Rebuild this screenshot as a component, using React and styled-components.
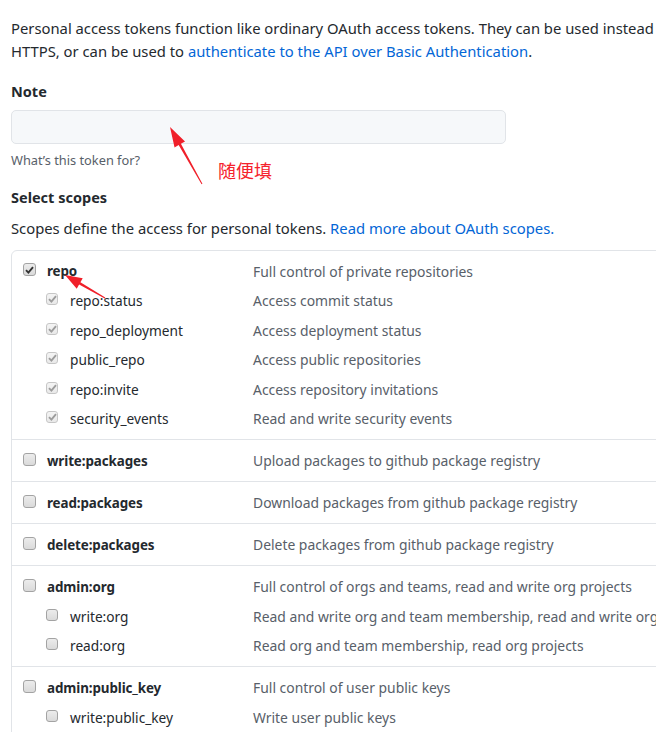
import styled, { createGlobalStyle } from 'styled-components'

const GlobalStyle = createGlobalStyle`
    html, body {
        margin: 0;
        background: #fff;
        overflow: hidden;
    }
    body {
        font-family: "Noto Sans", "Liberation Sans", sans-serif;
        color: #24292e;
    }
`;

const Page = styled.div`
    position: relative;
    width: 780px;
    padding: 17px 0 0 11px;
`;

const Intro = styled.div`
    font-size: 14.8px;
    line-height: 23px;
`;

const Line = styled.div`
    white-space: nowrap;
`;

const Link = styled.a`
    color: #0366d6;
    text-decoration: none;
`;

const Heading = styled.div`
    font-size: 14.5px;
    font-weight: 700;
    line-height: 21px;
    margin-top: ${props => props.$top}px;
`;

const NoteInput = styled.input`
    display: block;
    box-sizing: border-box;
    width: 495px;
    height: 34px;
    margin-top: 8px;
    background: #f6f8fa;
    border: 1px solid #e1e4e8;
    border-radius: 5px;
    outline: none;
`;

const Hint = styled.div`
    font-size: 12.8px;
    line-height: 18px;
    color: #586069;
    margin-top: 7px;
`;

const Text = styled.div`
    font-size: 14.8px;
    line-height: 21px;
    margin-top: 9.5px;
    white-space: nowrap;
`;

const ScopeBox = styled.div`
    margin-top: 11px;
    width: 760px;
    border: 1px solid #e1e4e8;
    border-radius: 6px;
`;

const ScopeGroup = styled.div`
    padding: 10px 0;
    & + & {
        border-top: 1px solid #e1e4e8;
    }
`;

const ScopeLine = styled.div`
    display: flex;
    align-items: center;
    height: 21px;
    margin-top: ${props => props.$sub ? '8.5px' : '0'};
    font-size: 14px;
    white-space: nowrap;
`;

const ScopeLabel = styled.div`
    display: flex;
    align-items: center;
    box-sizing: border-box;
    width: 241px;
    padding-left: ${props => props.$sub ? '34px' : '11px'};
    font-weight: ${props => props.$sub ? 400 : 700};
    font-size: ${props => props.$sub ? '13.7px' : '13.4px'};
    letter-spacing: ${props => props.$sub ? '0' : '-0.1px'};
    color: #24292e;
`;

const ScopeDesc = styled.div`
    font-size: 13.9px;
    color: #586069;
`;

const Box = styled.span`
    display: inline-flex;
    align-items: center;
    justify-content: center;
    box-sizing: border-box;
    width: ${props => props.$sub ? '12px' : '13px'};
    height: ${props => props.$sub ? '12px' : '13px'};
    margin-right: ${props => props.$sub ? '12px' : '11px'};
    margin-top: -3px;
    border: 1px solid ${props => props.$disabled ? '#c6c6c6' : '#a3a3a3'};
    border-radius: 3px;
    background: ${props => props.$disabled
        ? 'linear-gradient(#f4f4f4, #e9e9e9)'
        : 'linear-gradient(#ececec, #dadada)'};
`;

const Overlay = styled.svg`
    position: absolute;
    left: 0;
    top: 0;
    pointer-events: none;
`;

const Remark = styled.div`
    position: absolute;
    left: 218px;
    top: 158px;
    font-family: "Noto Sans CJK SC", sans-serif;
    font-size: 18px;
    line-height: 24px;
    color: #f5222d;
`;

const CheckBox = ({ checked, disabled, sub }) => (
    <Box $disabled={disabled} $sub={sub}>
        {checked && (
            <svg width="9" height="8" viewBox="0 0 9 8">
                <path d="M1 4.2 L3.4 6.6 L8 1.2" fill="none" stroke={disabled ? '#9c9c9c' : '#333'} strokeWidth="1.9" />
            </svg>
        )}
    </Box>
)

const scopes = [
    {
        name: 'repo', desc: 'Full control of private repositories', checked: true,
        subs: [
            ['repo:status', 'Access commit status'],
            ['repo_deployment', 'Access deployment status'],
            ['public_repo', 'Access public repositories'],
            ['repo:invite', 'Access repository invitations'],
            ['security_events', 'Read and write security events'],
        ],
    },
    { name: 'write:packages', desc: 'Upload packages to github package registry' },
    { name: 'read:packages', desc: 'Download packages from github package registry' },
    { name: 'delete:packages', desc: 'Delete packages from github package registry' },
    {
        name: 'admin:org', desc: 'Full control of orgs and teams, read and write org projects',
        subs: [
            ['write:org', 'Read and write org and team membership, read and write org projects'],
            ['read:org', 'Read org and team membership, read org projects'],
        ],
    },
    {
        name: 'admin:public_key', desc: 'Full control of user public keys',
        subs: [
            ['write:public_key', 'Write user public keys'],
            ['read:public_key', 'Read user public keys'],
        ],
    },
]

// arrow drawn from tail to tip, head as a triangle
const Arrow = ({ tail, tip, head = 20, half = 6 }) => {
    const dx = tip[0] - tail[0]
    const dy = tip[1] - tail[1]
    const len = Math.hypot(dx, dy)
    const ux = dx / len
    const uy = dy / len
    const px = -uy
    const py = ux
    const bx = tip[0] - ux * head
    const by = tip[1] - uy * head
    const pts = [
        tip,
        [bx + px * half, by + py * half],
        [bx + px * 1.3, by + py * 1.3],
        [tail[0] + px * 0.5, tail[1] + py * 0.5],
        [tail[0] - px * 0.5, tail[1] - py * 0.5],
        [bx - px * 1.3, by - py * 1.3],
        [bx - px * half, by - py * half],
    ]
    return <polygon points={pts.map(p => p.join(',')).join(' ')} fill="#f0202a" />
}

const App = () => {
    return (
        <Page>
            <GlobalStyle />
            <Intro>
                <Line>Personal access tokens function like ordinary OAuth access tokens. They can be used instead of a password for Git over</Line>
                <Line>HTTPS, or can be used to <Link href="#">authenticate to the API over Basic Authentication</Link>.</Line>
            </Intro>
            <Heading $top={17.5}>Note</Heading>
            <NoteInput type="text" />
            <Hint>What’s this token for?</Hint>
            <Heading $top={18.5}>Select scopes</Heading>
            <Text>
                Scopes define the access for personal tokens. <Link href="#">Read more about OAuth scopes.</Link>
            </Text>
            <ScopeBox>
                {scopes.map(scope => (
                    <ScopeGroup key={scope.name}>
                        <ScopeLine>
                            <ScopeLabel>
                                <CheckBox checked={scope.checked} />
                                {scope.name}
                            </ScopeLabel>
                            <ScopeDesc>{scope.desc}</ScopeDesc>
                        </ScopeLine>
                        {(scope.subs || []).map(([name, desc]) => (
                            <ScopeLine $sub key={name}>
                                <ScopeLabel $sub>
                                    <CheckBox sub checked={scope.checked} disabled={scope.checked} />
                                    {name}
                                </ScopeLabel>
                                <ScopeDesc>{desc}</ScopeDesc>
                            </ScopeLine>
                        ))}
                    </ScopeGroup>
                ))}
            </ScopeBox>
            <Remark>随便填</Remark>
            <Overlay width="656" height="732">
                <Arrow tail={[202, 184]} tip={[170, 127]} />
                <Arrow tail={[105, 298]} tip={[65, 275]} head={17} half={6} />
            </Overlay>
        </Page>
    )
}

export default App
